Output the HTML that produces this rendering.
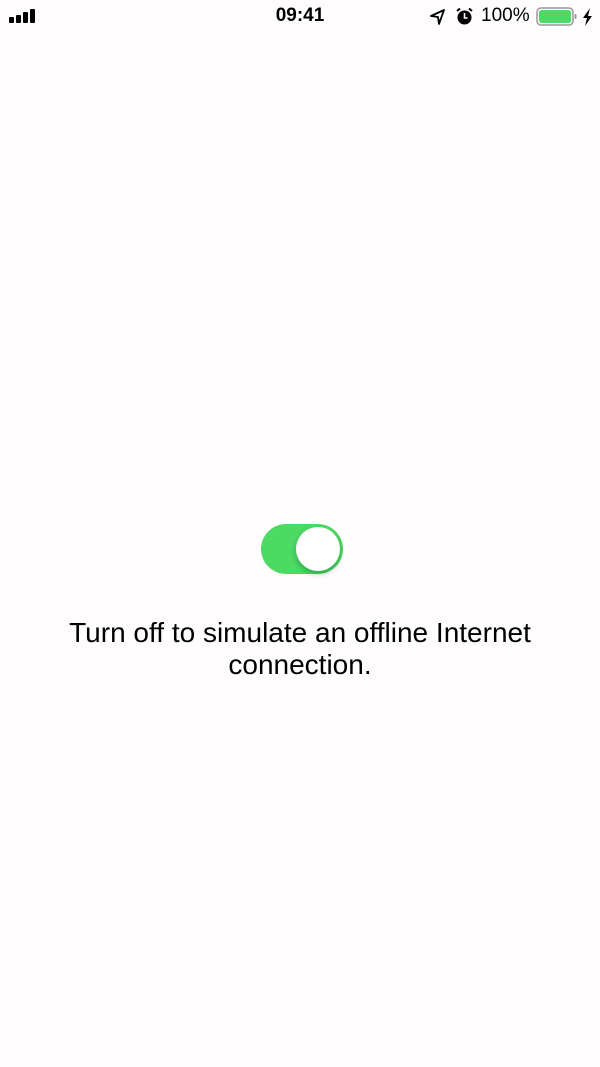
<!DOCTYPE html>
<html><head><style>
body{margin:0;width:600px;height:1067px;background:#fffdfe;font-family:"Liberation Sans",sans-serif;position:relative;overflow:hidden}
.sb{position:absolute;top:0;left:0;width:600px;height:34px}
.time{position:absolute;top:5px;left:0;width:600px;text-align:center;font-size:19px;font-weight:bold;color:#000}
.pct{position:absolute;top:5px;left:481px;font-size:19px;color:#000}
.tog{position:absolute;left:261px;top:524px;width:82px;height:50px;border-radius:25px;background:#4cd964}
.knob{position:absolute;left:296px;top:527px;width:44px;height:44px;border-radius:50%;background:#fff;box-shadow:0 3px 6px rgba(0,0,0,.25)}
.txt{position:absolute;top:617px;left:0;width:600px;text-align:center;font-size:28px;line-height:32px;color:#000}
</style></head><body>
<div class="sb">
<svg style="position:absolute;left:9px;top:9px" width="28" height="14"><rect x="0" y="8" width="5" height="6" rx="1"/><rect x="7" y="6" width="5" height="8" rx="1"/><rect x="14" y="3" width="5" height="11" rx="1"/><rect x="21" y="0" width="5" height="14" rx="1"/></svg>
<div class="time">09:41</div>
<svg style="position:absolute;left:430px;top:9px" width="16" height="16"><path d="M14 1 L1 7 L8 8 L9 15 Z" fill="none" stroke="#000" stroke-width="1.8" stroke-linejoin="round"/></svg>
<svg style="position:absolute;left:455px;top:7px" width="19" height="19"><circle cx="9.5" cy="10.5" r="7" fill="#000"/><path d="M9.5 6v5h3" stroke="#fff" stroke-width="1.6" fill="none"/><path d="M2 4l3-2.5M17 4l-3-2.5" stroke="#000" stroke-width="2"/></svg>
<div class="pct">100%</div>
<svg style="position:absolute;left:536px;top:7px" width="42" height="20"><rect x="1" y="1" width="36" height="17" rx="4" fill="none" stroke="#999" stroke-width="1.5"/><rect x="3" y="3" width="32" height="13" rx="2.5" fill="#4cd964"/><rect x="38.5" y="7" width="2" height="5" rx="1" fill="#999"/></svg>
<svg style="position:absolute;left:582px;top:8px" width="12" height="18"><path d="M8 0L1 10h4l-2 8 7-10H6z" fill="#000"/></svg>
</div>
<div class="tog"></div><div class="knob"></div>
<div class="txt">Turn off to simulate an offline Internet<br>connection.</div>
</body></html>
